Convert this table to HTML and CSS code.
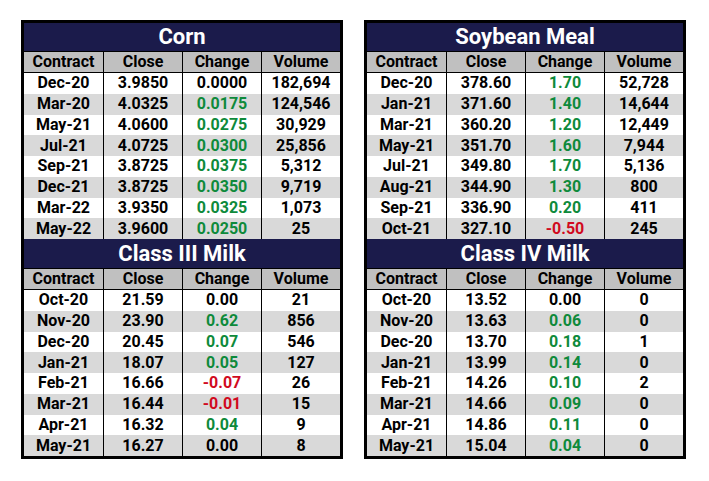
FILE: index.html
```html
<!DOCTYPE html>
<html>
<head>
<meta charset="utf-8">
<link rel="stylesheet" href="styles.css">
</head>
<body>
<div class="page">
  <table class="board">
    <tbody>
      <tr class="title"><th colspan="4">Corn</th></tr>
      <tr class="head"><th>Contract</th><th>Close</th><th>Change</th><th>Volume</th></tr>
      <tr><td>Dec-20</td><td>3.9850</td><td>0.0000</td><td>182,694</td></tr>
      <tr><td>Mar-20</td><td>4.0325</td><td class="up">0.0175</td><td>124,546</td></tr>
      <tr><td>May-21</td><td>4.0600</td><td class="up">0.0275</td><td>30,929</td></tr>
      <tr><td>Jul-21</td><td>4.0725</td><td class="up">0.0300</td><td>25,856</td></tr>
      <tr><td>Sep-21</td><td>3.8725</td><td class="up">0.0375</td><td>5,312</td></tr>
      <tr><td>Dec-21</td><td>3.8725</td><td class="up">0.0350</td><td>9,719</td></tr>
      <tr><td>Mar-22</td><td>3.9350</td><td class="up">0.0325</td><td>1,073</td></tr>
      <tr><td>May-22</td><td>3.9600</td><td class="up">0.0250</td><td>25</td></tr>
    </tbody>
    <tbody>
      <tr class="title"><th colspan="4">Class III Milk</th></tr>
      <tr class="head"><th>Contract</th><th>Close</th><th>Change</th><th>Volume</th></tr>
      <tr><td>Oct-20</td><td>21.59</td><td>0.00</td><td>21</td></tr>
      <tr><td>Nov-20</td><td>23.90</td><td class="up">0.62</td><td>856</td></tr>
      <tr><td>Dec-20</td><td>20.45</td><td class="up">0.07</td><td>546</td></tr>
      <tr><td>Jan-21</td><td>18.07</td><td class="up">0.05</td><td>127</td></tr>
      <tr><td>Feb-21</td><td>16.66</td><td class="down">-0.07</td><td>26</td></tr>
      <tr><td>Mar-21</td><td>16.44</td><td class="down">-0.01</td><td>15</td></tr>
      <tr><td>Apr-21</td><td>16.32</td><td class="up">0.04</td><td>9</td></tr>
      <tr><td>May-21</td><td>16.27</td><td>0.00</td><td>8</td></tr>
    </tbody>
  </table>
  <table class="board">
    <tbody>
      <tr class="title"><th colspan="4">Soybean Meal</th></tr>
      <tr class="head"><th>Contract</th><th>Close</th><th>Change</th><th>Volume</th></tr>
      <tr><td>Dec-20</td><td>378.60</td><td class="up">1.70</td><td>52,728</td></tr>
      <tr><td>Jan-21</td><td>371.60</td><td class="up">1.40</td><td>14,644</td></tr>
      <tr><td>Mar-21</td><td>360.20</td><td class="up">1.20</td><td>12,449</td></tr>
      <tr><td>May-21</td><td>351.70</td><td class="up">1.60</td><td>7,944</td></tr>
      <tr><td>Jul-21</td><td>349.80</td><td class="up">1.70</td><td>5,136</td></tr>
      <tr><td>Aug-21</td><td>344.90</td><td class="up">1.30</td><td>800</td></tr>
      <tr><td>Sep-21</td><td>336.90</td><td class="up">0.20</td><td>411</td></tr>
      <tr><td>Oct-21</td><td>327.10</td><td class="down">-0.50</td><td>245</td></tr>
    </tbody>
    <tbody>
      <tr class="title"><th colspan="4">Class IV Milk</th></tr>
      <tr class="head"><th>Contract</th><th>Close</th><th>Change</th><th>Volume</th></tr>
      <tr><td>Oct-20</td><td>13.52</td><td>0.00</td><td>0</td></tr>
      <tr><td>Nov-20</td><td>13.63</td><td class="up">0.06</td><td>0</td></tr>
      <tr><td>Dec-20</td><td>13.70</td><td class="up">0.18</td><td>1</td></tr>
      <tr><td>Jan-21</td><td>13.99</td><td class="up">0.14</td><td>0</td></tr>
      <tr><td>Feb-21</td><td>14.26</td><td class="up">0.10</td><td>2</td></tr>
      <tr><td>Mar-21</td><td>14.66</td><td class="up">0.09</td><td>0</td></tr>
      <tr><td>Apr-21</td><td>14.86</td><td class="up">0.11</td><td>0</td></tr>
      <tr><td>May-21</td><td>15.04</td><td class="up">0.04</td><td>0</td></tr>
    </tbody>
  </table>
</div>
</body>
</html>
```
FILE: styles.css
```css
html, body {
  margin: 0;
  padding: 0;
  background: #ffffff;
}

.page {
  display: flex;
  align-items: flex-start;
  gap: 21px;
  padding: 20px 0 0 21px;
  font-family: Roboto, "Liberation Sans", Arial, sans-serif;
  font-weight: bold;
  color: #000;
}

.board {
  width: 322px;
  table-layout: fixed;
  border-collapse: separate;
  border-spacing: 0;
  border: 3px solid #000;
}

.board th,
.board td {
  padding: 0;
  text-align: center;
  vertical-align: middle;
  white-space: nowrap;
  font-size: 16px;
  line-height: 1;
}

.title th {
  height: 28px;
  background: #1b1b4b;
  color: #ffffff;
  font-size: 22px;
  border-bottom: 1px solid #000;
}

tbody + tbody .title th {
  height: 29px;
}

.head th {
  height: 20px;
  background: #c0c0c0;
  border-bottom: 1px solid #000;
}

.board td {
  height: 20.75px;
  background: #ffffff;
}

.board tr:nth-child(even) td {
  background: #d9d9d9;
}

.head th + th,
.board td + td {
  border-left: 1px solid #000;
}

.up {
  color: #0e8a3b;
}

.down {
  color: #d10a1e;
}
```
